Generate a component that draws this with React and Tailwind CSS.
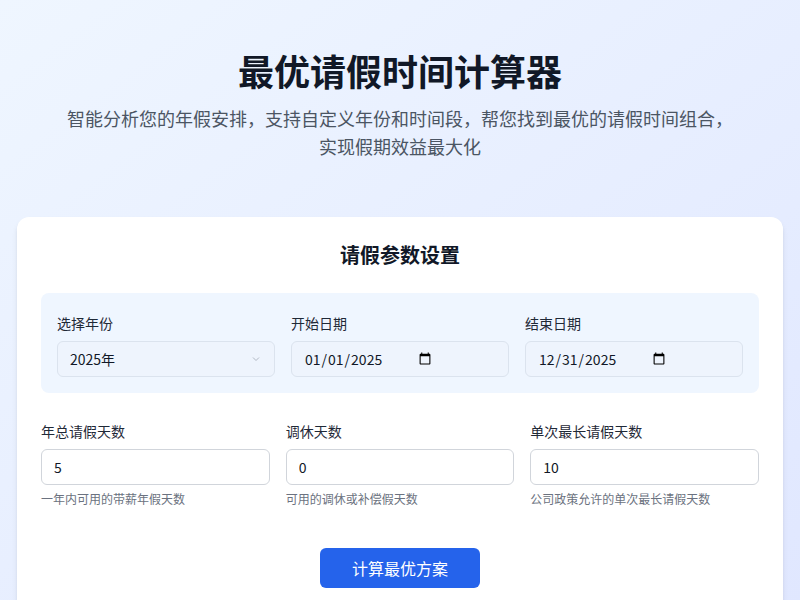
export default function App() {
  const font = { fontFamily: '"Noto Sans CJK SC", "Noto Sans", sans-serif' };
  return (
    <div style={font} className="min-h-[600px] bg-gradient-to-br from-[#eff6ff] to-[#e0e7ff] px-[17px] pt-[44px]">
      <div className="text-center">
        <h1 className="text-[36px] font-bold leading-[52px] text-[#111827]">最优请假时间计算器</h1>
        <p className="mx-auto mt-[8px] max-w-[680px] text-[18px] leading-[28px] text-[#4b5563]">
          智能分析您的年假安排，支持自定义年份和时间段，帮您找到最优的请假时间组合，实现假期效益最大化
        </p>
      </div>
      <div className="mt-[57px] rounded-xl bg-white p-6 shadow-md">
        <h2 className="text-center text-[20px] font-bold leading-[28px] text-[#111827]">请假参数设置</h2>
        <div className="mt-[24px] grid grid-cols-3 gap-4 rounded-lg bg-[#eff6ff] p-4 pt-[20px]">
          <div>
            <div className="text-sm leading-5 text-[#1f2937]">选择年份</div>
            <div className="mt-2 flex h-9 items-center justify-between rounded-md border border-[#dbe3ee] bg-[#eef4fd] px-3 text-sm text-[#111827]">
              <span>2025年</span>
              <svg width="12" height="12" viewBox="0 0 24 24" fill="none" stroke="#9ca3af" strokeWidth="1.5"><path d="m6 9 6 6 6-6"/></svg>
            </div>
          </div>
          {[["开始日期","2025-01-01"],["结束日期","2025-12-31"]].map(([l,v])=>(
            <div key={l}>
              <div className="text-sm leading-5 text-[#1f2937]">{l}</div>
              <div className="mt-2 flex h-9 items-center rounded-md border border-[#dbe3ee] bg-[#eef4fd] px-3">
                <input type="date" defaultValue={v} style={font} className="w-[130px] bg-transparent text-sm text-[#111827] outline-none" />
              </div>
            </div>
          ))}
        </div>
        <div className="mt-[28px] grid grid-cols-3 gap-4">
          {[["年总请假天数","5","一年内可用的带薪年假天数"],["调休天数","0","可用的调休或补偿假天数"],["单次最长请假天数","10","公司政策允许的单次最长请假天数"]].map(([l,v,h])=>(
            <div key={l}>
              <div className="text-sm leading-5 text-[#1f2937]">{l}</div>
              <input type="number" defaultValue={v} style={font} className="mt-2 h-9 w-full rounded-md border border-[#d1d5db] bg-white px-3 text-sm text-[#111827]" />
              <div className="mt-[6px] text-xs text-[#6b7280]">{h}</div>
            </div>
          ))}
        </div>
        <div className="mt-[41px] flex justify-center">
          <button style={font} className="h-10 w-40 rounded-md bg-[#2563eb] text-base text-white">计算最优方案</button>
        </div>
      </div>
    </div>
  );
}
